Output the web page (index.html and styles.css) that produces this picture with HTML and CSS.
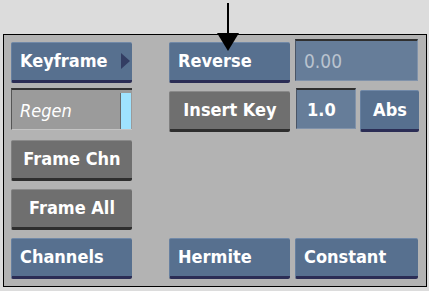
FILE: index.html
```html
<!DOCTYPE html>
<html lang="en">
<head>
  <meta charset="UTF-8">
  <title>Keyframe Menu</title>
  <link rel="stylesheet" href="styles.css">
</head>
<body>
  <!-- callout arrow pointing at Reverse -->
  <svg class="callout" width="24" height="50" viewBox="0 0 24 50">
    <rect x="11" y="0" width="2" height="32" fill="#000"/>
    <polygon points="1,30 23,30 12,48" fill="#000"/>
  </svg>

  <div class="panel">
    <!-- row 1 -->
    <div class="btn blue menu">Keyframe<span class="tri"></span></div>
    <div class="btn blue">Reverse</div>
    <div class="field dim">0.00</div>

    <!-- row 2 -->
    <div class="toggle">Regen<span class="led"></span></div>
    <div class="btn gray center">Insert Key</div>
    <div class="pair">
      <div class="field">1.0</div>
      <div class="btn blue center">Abs</div>
    </div>

    <!-- row 3 -->
    <div class="btn gray center">Frame Chn</div>
    <div></div>
    <div></div>

    <!-- row 4 -->
    <div class="btn gray center">Frame All</div>
    <div></div>
    <div></div>

    <!-- row 5 -->
    <div class="btn blue">Channels</div>
    <div class="btn blue">Hermite</div>
    <div class="btn blue">Constant</div>
  </div>
</body>
</html>
```

FILE: styles.css
```css
body {
  margin: 0;
  background-color: #dcdcdc;
  font-family: "DejaVu Sans Condensed", "DejaVu Sans", sans-serif;
  font-stretch: condensed;
  position: relative;
  height: 291px;
  overflow: hidden;
}

.callout {
  position: absolute;
  left: 216px;
  top: 3px;
  z-index: 2;
}

.panel {
  box-sizing: border-box;
  width: 424px;
  margin: 34px 0 0 3px;
  padding: 4px 8px 7px 7px;
  background-color: #b3b3b3;
  border: 1px solid #000;
  display: grid;
  grid-template-columns: 153px 121px 123px;
  grid-template-rows: repeat(5, 44px);
  column-gap: 5px;
  row-gap: 5px;
}

.panel > :nth-child(3n+1) {
  width: 121px;
}

.btn {
  box-sizing: border-box;
  height: 41px;
  align-self: end;
  display: flex;
  align-items: center;
  padding: 0 8px 2px;
  color: #fff;
  font-size: 18px;
  font-weight: bold;
  border-radius: 2px;
  white-space: nowrap;
}

.blue {
  background-color: #57708f;
  border-top: 1px solid #7189a8;
  border-left: 1px solid #6780a0;
  border-bottom: 3px solid #2b2d55;
}

.gray {
  background-color: #6f6f6f;
  border-top: 1px solid #8a8a8a;
  border-left: 1px solid #808080;
  border-bottom: 3px solid #2e2e2e;
}

.center {
  justify-content: center;
}

.menu {
  justify-content: space-between;
  padding-right: 2px;
}

.tri {
  width: 0;
  height: 0;
  border-top: 8px solid transparent;
  border-bottom: 8px solid transparent;
  border-left: 9px solid #333d63;
}

.field {
  box-sizing: border-box;
  height: 42px;
  align-self: start;
  display: flex;
  align-items: center;
  padding: 0 10px;
  background-color: #667d99;
  border-top: 2px solid #2f2f2f;
  border-left: 1px solid #4a5566;
  border-right: 1px solid #8092aa;
  border-bottom: 1px solid #8092aa;
  color: #fff;
  font-size: 18px;
  font-weight: bold;
}

.dim {
  color: #b9c3cf;
  font-weight: normal;
  font-size: 19px;
  padding-left: 8px;
}

.toggle {
  box-sizing: border-box;
  height: 42px;
  align-self: start;
  display: flex;
  align-items: center;
  justify-content: space-between;
  padding: 2px 1px 0 8px;
  background-color: #9b9b9b;
  border-top: 2px solid #333;
  border-left: 1px solid #555;
  border-bottom: 1px solid #c4c4c4;
  color: #fff;
  font-size: 18px;
  font-style: italic;
}

.led {
  width: 10px;
  height: 36px;
  background-color: #9fe3ff;
  border-left: 1px solid #6a6a6a;
}

.pair {
  display: grid;
  grid-template-columns: 60px 59px;
  column-gap: 4px;
  margin-left: 1px;
}

.pair .field {
  height: 41px;
}

.pair .btn {
  height: 42px;
  align-self: start;
  margin-top: 2px;
}
```
